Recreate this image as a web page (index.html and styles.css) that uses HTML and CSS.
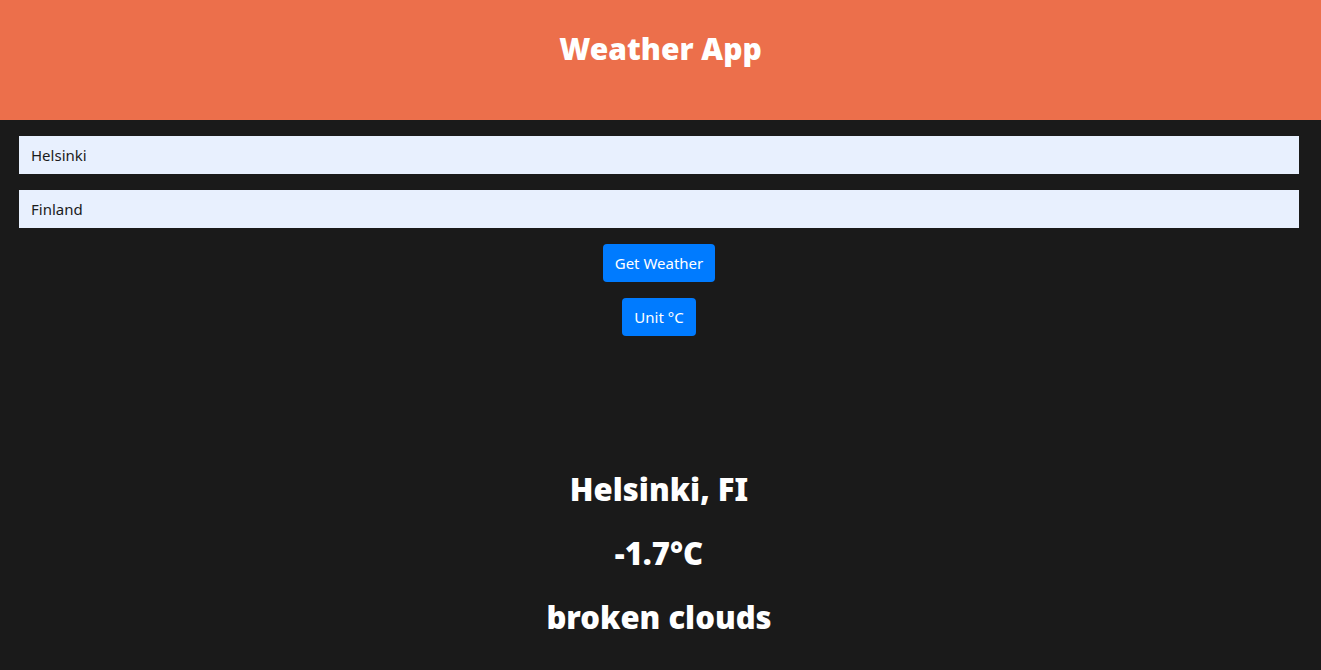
FILE: index.html
```html
<!DOCTYPE html>
<html lang="en">
<head>
<meta charset="utf-8">
<title>Weather App</title>
<link rel="stylesheet" href="styles.css">
</head>
<body>
<header class="app-header">
  <h1 class="app-title">Weather App</h1>
</header>
<main class="app-main">
  <form class="search-form">
    <input class="field" type="text" value="Helsinki">
    <input class="field" type="text" value="Finland">
    <button class="btn" type="button">Get Weather</button>
    <button class="btn" type="button">Unit °C</button>
  </form>
  <section class="result">
    <h2 class="result-line">Helsinki, FI</h2>
    <h2 class="result-line">-1.7°C</h2>
    <h2 class="result-line">broken clouds</h2>
  </section>
</main>
</body>
</html>
```
FILE: styles.css
```css
* { box-sizing: border-box; }
html, body {
  margin: 0;
  background: #1a1a1a;
  font-family: "Noto Sans", "Open Sans", sans-serif;
  height: 100%;
}
.app-header {
  background: #ec6f4b;
  height: 120px;
  display: flex;
  justify-content: center;
  padding-top: 28px;
}
.app-title {
  margin: 0;
  color: #fff;
  font-size: 30px;
  font-weight: 900;
  line-height: 42px;
  height: 42px;
}
.app-main {
  padding: 16px 22px 0 19px;
}
.search-form {
  display: flex;
  flex-direction: column;
  align-items: center;
  gap: 16px;
}
.field {
  width: 100%;
  height: 38px;
  border: none;
  outline: none;
  background: #e8f0fe;
  color: #1b1b1b;
  font-family: inherit;
  font-size: 15px;
  padding: 0 12px;
  margin: 0;
}
.btn {
  height: 38px;
  border: none;
  border-radius: 4px;
  background: #007bff;
  color: #fff;
  font-family: inherit;
  font-size: 15px;
  padding: 0 12px;
  margin: 0;
}
.result {
  display: flex;
  flex-direction: column;
  align-items: center;
  gap: 19px;
  padding-top: 131px;
}
.result-line {
  margin: 0;
  color: #fff;
  font-size: 31px;
  font-weight: 900;
  line-height: 45px;
}
```
